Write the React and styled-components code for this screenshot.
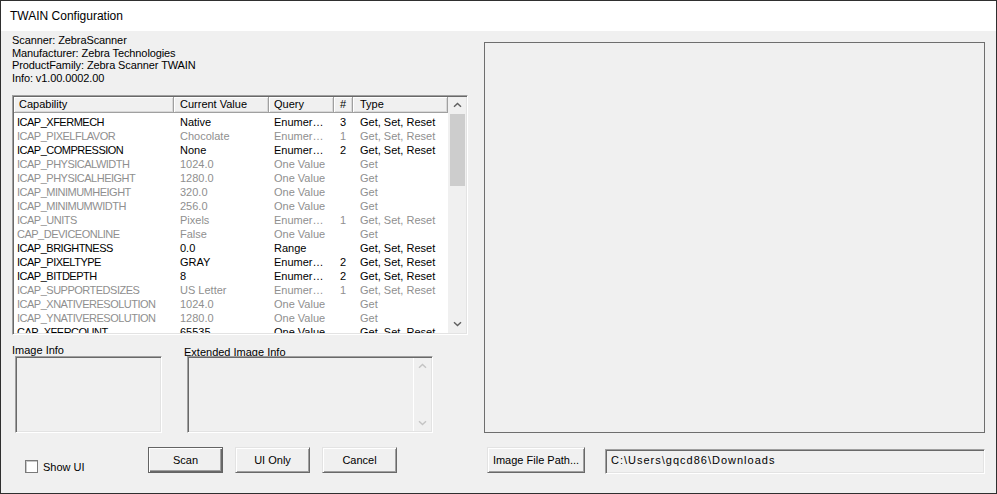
import React from 'react';
import styled, { createGlobalStyle } from 'styled-components';

const GlobalStyle = createGlobalStyle`
  html, body {
    margin: 0;
    padding: 0;
    background: #ffffff;
  }
  * {
    box-sizing: border-box;
  }
`;

const Window = styled.div`
  width: 997px;
  height: 494px;
  border: 1px solid #2f2f2f;
  background: #f0f0f0;
  display: flex;
  flex-direction: column;
  font-family: "Liberation Sans", Arial, sans-serif;
  font-size: 11px;
  color: #000;
  overflow: hidden;
`;

const TitleBar = styled.div`
  height: 30px;
  flex: none;
  background: #ffffff;
  display: flex;
  align-items: center;
  padding-left: 9px;
  font-size: 12px;
`;

const Body = styled.div`
  flex: 1;
  display: grid;
  grid-template-columns: 456px 502px;
  grid-template-rows: 402px 1fr;
  column-gap: 16px;
  row-gap: 14px;
  padding-left: 11px;
`;

const LeftTop = styled.div`
  display: flex;
  flex-direction: column;
  min-height: 0;
`;

const InfoBlock = styled.div`
  padding-top: 3px;
  line-height: 12.7px;
  letter-spacing: -0.1px;
`;

const Table = styled.div`
  margin-top: 10px;
  height: 240px;
  background: #ffffff;
  border: 1px solid;
  border-color: #a0a0a0 #ffffff #ffffff #a0a0a0;
  box-shadow: inset 1px 1px #696969, inset -1px -1px #e3e3e3;
  padding: 1px;
  display: flex;
`;

const TableMain = styled.div`
  width: 434px;
  display: flex;
  flex-direction: column;
  overflow: hidden;
`;

const HeaderRow = styled.div`
  display: flex;
  height: 16px;
  flex: none;
`;

const HeaderCell = styled.div`
  width: ${p => p.$w}px;
  flex: none;
  padding-left: ${p => p.$pad}px;
  background: #f0f0f0;
  border-right: 1px solid #a0a0a0;
  border-bottom: 1px solid #a0a0a0;
  box-shadow: inset 1px 1px #ffffff, inset -1px -1px #d8d8d8;
  line-height: 15px;
  white-space: nowrap;
  overflow: hidden;
`;

const Rows = styled.div`
  flex: 1;
  overflow: hidden;
  padding-top: 2px;
`;

const Row = styled.div`
  display: flex;
  height: 14px;
  line-height: 14px;
  color: ${p => (p.$dim ? '#8f8f8f' : '#000000')};
`;

const Cell = styled.div`
  width: ${p => p.$w}px;
  flex: none;
  padding-left: ${p => p.$pad}px;
  letter-spacing: ${p => p.$ls || 0}px;
  white-space: nowrap;
  overflow: hidden;
`;

const ScrollBar = styled.div`
  width: 18px;
  flex: none;
  display: flex;
  flex-direction: column;
  background: #f0f0f0;
  border-left: 1px solid ${p => (p.$disabled ? '#ffffff' : '#f0f0f0')};
`;

const ScrollArrow = styled.div`
  height: 17px;
  flex: none;
  display: flex;
  align-items: center;
  justify-content: center;
`;

const ScrollTrack = styled.div`
  flex: 1;
  padding: 0 1px;
`;

const Thumb = styled.div`
  height: 72px;
  background: #cdcdcd;
`;

const InfoGroups = styled.div`
  flex: 1;
  display: flex;
  gap: 22px;
  margin-top: 9px;
  min-height: 0;
`;

const Group = styled.div`
  width: ${p => p.$w}px;
  display: flex;
  flex-direction: column;
`;

const GroupLabel = styled.div`
  height: 12px;
  line-height: 12px;
  padding-top: ${p => p.$drop || 0}px;
  white-space: nowrap;
  overflow: visible;
`;

const Sunken = styled.div`
  background: #f0f0f0;
  border: 1px solid;
  border-color: #a0a0a0 #ffffff #ffffff #a0a0a0;
  box-shadow: inset 1px 1px #696969, inset -1px -1px #e3e3e3;
`;

const InfoBox = styled(Sunken)`
  flex: 1;
  margin-left: 3px;
  display: flex;
  justify-content: flex-end;
  padding: 1px;
`;

const RightPanel = styled.div`
  margin-top: 11px;
  margin-right: 1px;
  border: 1px solid #6e6e6e;
  background: #f0f0f0;
`;

const BottomLeft = styled.div`
  display: flex;
  align-items: flex-start;
`;

const CheckArea = styled.label`
  width: 136px;
  flex: none;
  display: flex;
  align-items: center;
  gap: 5px;
  padding-left: 13px;
  margin-top: 13px;
`;

const CheckBox = styled.span`
  width: 13px;
  height: 13px;
  background: #ffffff;
  border: 1px solid #7a7a7a;
  box-shadow: inset 1px 1px #c8c8c8;
`;

const Buttons = styled.div`
  display: flex;
  gap: 12px;
`;

const Button = styled.button`
  width: ${p => p.$w || 75}px;
  height: 26px;
  margin-left: ${p => p.$ml || 0}px;
  padding: 0;
  font-family: "Liberation Sans", Arial, sans-serif;
  font-size: 11px;
  color: #000;
  background: #f0f0f0;
  border: 1px solid;
  border-color: ${p => (p.$default ? '#646464' : '#e3e3e3 #696969 #696969 #e3e3e3')};
  box-shadow: ${p =>
    p.$default
      ? 'inset 1px 1px #ffffff, inset -1px -1px #696969, inset -2px -2px #a0a0a0'
      : 'inset 1px 1px #ffffff, inset -1px -1px #a0a0a0'};
`;

const BottomRight = styled.div`
  display: flex;
  align-items: flex-start;
`;

const PathBox = styled(Sunken)`
  flex: 1;
  height: 25px;
  margin: 2px 1px 0 20px;
  padding-left: 5px;
  line-height: 21px;
  letter-spacing: 1px;
`;

const Chevron = ({ down, color }) => (
  <svg width="9" height="6" viewBox="0 0 9 6">
    <path
      d={down ? 'M1 1.2 L4.5 4.6 L8 1.2' : 'M1 4.8 L4.5 1.4 L8 4.8'}
      fill="none"
      stroke={color}
      strokeWidth="1.4"
    />
  </svg>
);

const columns = [
  { w: 160, hp: 5, dp: 3, ls: -0.5 },
  { w: 95, hp: 6, dp: 6 },
  { w: 65, hp: 5, dp: 5 },
  { w: 19, hp: 6, dp: 6 },
  { w: 95, hp: 7, dp: 7 },
];

const headers = ['Capability', 'Current Value', 'Query', '#', 'Type'];

const GSR = 'Get, Set, Reset';
const EN = 'Enumer\u2026';
const OV = 'One Value';

const rows = [
  ['ICAP_XFERMECH', 'Native', EN, '3', GSR, false],
  ['ICAP_PIXELFLAVOR', 'Chocolate', EN, '1', GSR, true],
  ['ICAP_COMPRESSION', 'None', EN, '2', GSR, false],
  ['ICAP_PHYSICALWIDTH', '1024.0', OV, '', 'Get', true],
  ['ICAP_PHYSICALHEIGHT', '1280.0', OV, '', 'Get', true],
  ['ICAP_MINIMUMHEIGHT', '320.0', OV, '', 'Get', true],
  ['ICAP_MINIMUMWIDTH', '256.0', OV, '', 'Get', true],
  ['ICAP_UNITS', 'Pixels', EN, '1', GSR, true],
  ['CAP_DEVICEONLINE', 'False', OV, '', 'Get', true],
  ['ICAP_BRIGHTNESS', '0.0', 'Range', '', GSR, false],
  ['ICAP_PIXELTYPE', 'GRAY', EN, '2', GSR, false],
  ['ICAP_BITDEPTH', '8', EN, '2', GSR, false],
  ['ICAP_SUPPORTEDSIZES', 'US Letter', EN, '1', GSR, true],
  ['ICAP_XNATIVERESOLUTION', '1024.0', OV, '', 'Get', true],
  ['ICAP_YNATIVERESOLUTION', '1280.0', OV, '', 'Get', true],
  ['CAP_XFERCOUNT', '65535', OV, '', GSR, false],
];

export default function App() {
  return (
    <>
      <GlobalStyle />
      <Window>
        <TitleBar>TWAIN Configuration</TitleBar>
        <Body>
          <LeftTop>
            <InfoBlock>
              <div>Scanner: ZebraScanner</div>
              <div>Manufacturer: Zebra Technologies</div>
              <div>ProductFamily: Zebra Scanner TWAIN</div>
              <div>Info: v1.00.0002.00</div>
            </InfoBlock>

            <Table>
              <TableMain>
                <HeaderRow>
                  {headers.map((h, i) => (
                    <HeaderCell key={h} $w={columns[i].w} $pad={columns[i].hp}>
                      {h}
                    </HeaderCell>
                  ))}
                </HeaderRow>
                <Rows>
                  {rows.map(r => (
                    <Row key={r[0]} $dim={r[5]}>
                      {columns.map((c, i) => (
                        <Cell key={i} $w={c.w} $pad={c.dp} $ls={c.ls}>
                          {r[i]}
                        </Cell>
                      ))}
                    </Row>
                  ))}
                </Rows>
              </TableMain>
              <ScrollBar>
                <ScrollArrow>
                  <Chevron color="#606060" />
                </ScrollArrow>
                <ScrollTrack>
                  <Thumb />
                </ScrollTrack>
                <ScrollArrow>
                  <Chevron down color="#606060" />
                </ScrollArrow>
              </ScrollBar>
            </Table>

            <InfoGroups>
              <Group $w={150}>
                <GroupLabel>Image Info</GroupLabel>
                <InfoBox />
              </Group>
              <Group $w={249}>
                <GroupLabel $drop={2}>Extended Image Info</GroupLabel>
                <InfoBox>
                  <ScrollBar $disabled>
                    <ScrollArrow>
                      <Chevron color="#c4c4c4" />
                    </ScrollArrow>
                    <ScrollTrack />
                    <ScrollArrow>
                      <Chevron down color="#c4c4c4" />
                    </ScrollArrow>
                  </ScrollBar>
                </InfoBox>
              </Group>
            </InfoGroups>
          </LeftTop>

          <RightPanel />

          <BottomLeft>
            <CheckArea>
              <CheckBox />
              <span>Show UI</span>
            </CheckArea>
            <Buttons>
              <Button $default>Scan</Button>
              <Button>UI Only</Button>
              <Button>Cancel</Button>
            </Buttons>
          </BottomLeft>

          <BottomRight>
            <Button $w={98} $ml={3}>Image File Path...</Button>
            <PathBox>C:\Users\gqcd86\Downloads</PathBox>
          </BottomRight>
        </Body>
      </Window>
    </>
  );
}
